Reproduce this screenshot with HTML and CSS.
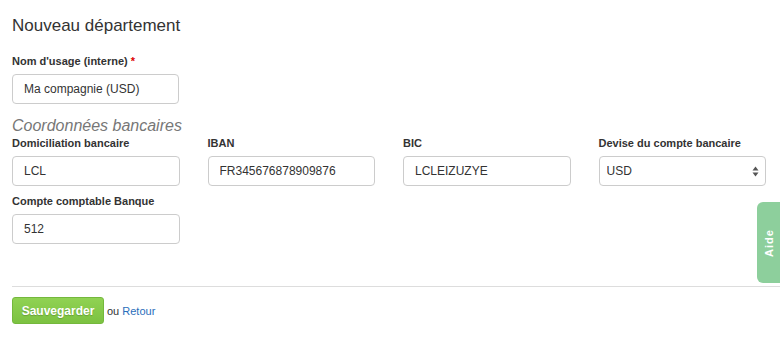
FILE: index.html
```html
<!DOCTYPE html>
<html lang="fr">
<head>
    <meta charset="UTF-8">
    <title>Nouveau département</title>
    <link rel="stylesheet" href="styles.css">
</head>
<body>
    <form class="dept-form">
        <div class="form-body">
            <h1>Nouveau département</h1>

            <div class="field field-name">
                <label>Nom d'usage (interne) <abbr>*</abbr></label>
                <input type="text" value="Ma compagnie (USD)">
            </div>

            <h2>Coordonnées bancaires</h2>
            <div class="bank-grid">
                <div class="field">
                    <label>Domiciliation bancaire</label>
                    <input type="text" value="LCL">
                </div>
                <div class="field">
                    <label>IBAN</label>
                    <input type="text" value="FR345676878909876">
                </div>
                <div class="field">
                    <label>BIC</label>
                    <input type="text" value="LCLEIZUZYE">
                </div>
                <div class="field">
                    <label>Devise du compte bancaire</label>
                    <div class="select-wrap">
                        <select>
                            <option>USD</option>
                            <option>EUR</option>
                        </select>
                        <svg class="select-arrows" width="7" height="11" viewBox="0 0 7 11">
                            <path d="M3.5 0.5 L6.5 4.5 L0.5 4.5 Z" fill="#555"/>
                            <path d="M3.5 10.5 L6.5 6.5 L0.5 6.5 Z" fill="#555"/>
                        </svg>
                    </div>
                </div>
                <div class="field">
                    <label>Compte comptable Banque</label>
                    <input type="text" value="512">
                </div>
            </div>
        </div>

        <div class="form-actions">
            <button type="button" class="btn-save">Sauvegarder</button>
            <span class="or">ou <a href="#">Retour</a></span>
        </div>
    </form>

    <div class="help-tab"><span>Aide</span></div>
</body>
</html>
```

FILE: styles.css
```css
body {
    margin: 0;
    font-family: "Liberation Sans", Arial, sans-serif;
    color: #333;
    background-color: #fff;
}

.dept-form {
    padding-top: 16px;
    padding-left: 12px;
}

.form-body {
    padding-right: 14px;
}

h1 {
    margin: 0 0 18px 0;
    font-size: 17px;
    line-height: 20px;
    font-weight: normal;
    color: #333;
}

h2 {
    margin: 12px 0 0 0;
    font-size: 16px;
    line-height: 20px;
    font-weight: normal;
    font-style: italic;
    color: #777;
}

.field label {
    display: block;
    font-size: 11px;
    line-height: 15px;
    font-weight: bold;
    color: #333;
    margin-bottom: 5px;
}

.field label abbr {
    color: #d00;
    text-decoration: none;
}

.field-name {
    width: 167px;
}

.bank-grid {
    display: grid;
    grid-template-columns: repeat(4, 1fr);
    column-gap: 28px;
    row-gap: 8px;
}

.field input,
.field select {
    display: block;
    box-sizing: border-box;
    width: 100%;
    height: 30px;
    padding: 0 11px;
    font-family: "Liberation Sans", Arial, sans-serif;
    font-size: 12px;
    color: #333;
    background-color: #fff;
    border: 1px solid #ccc;
    border-radius: 4px;
    outline: none;
}

.select-wrap {
    position: relative;
}

.field select {
    -webkit-appearance: none;
    appearance: none;
    padding-left: 7px;
}

.select-arrows {
    position: absolute;
    right: 7px;
    top: 10px;
    pointer-events: none;
}

.form-actions {
    margin-top: 42px;
    border-top: 1px solid #ddd;
    padding-top: 10px;
    display: flex;
    align-items: center;
    font-size: 11px;
}

.btn-save {
    height: 27px;
    width: 92px;
    padding: 0;
    font-family: "Liberation Sans", Arial, sans-serif;
    font-size: 12px;
    font-weight: bold;
    color: #fff;
    text-shadow: 0 1px 1px rgba(0, 0, 0, 0.2);
    background: linear-gradient(#90d253, #7cc241);
    border: 1px solid #74b83c;
    border-radius: 3px;
    cursor: pointer;
}

.or {
    margin-left: 3px;
    color: #333;
}

.or a {
    color: #2a6ebb;
    text-decoration: none;
}

.help-tab {
    position: absolute;
    right: 0;
    top: 202px;
    width: 23px;
    height: 81px;
    background-color: #8dcf9c;
    border-radius: 6px 0 0 6px;
    display: flex;
    align-items: center;
    justify-content: center;
}

.help-tab span {
    transform: rotate(-90deg);
    color: #fff;
    font-size: 11px;
    font-weight: bold;
    letter-spacing: 1px;
}
```
